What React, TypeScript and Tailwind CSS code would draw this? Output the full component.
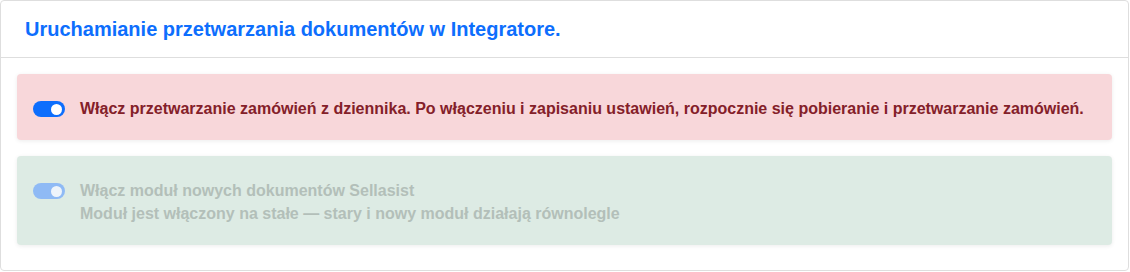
function Toggle({ disabled }: { disabled?: boolean }) {
  return (
    <div
      className={
        "mt-[4px] flex h-4 w-8 shrink-0 items-center justify-end rounded-full pr-[3px] " +
        (disabled ? "bg-[#8fbaf5]" : "bg-[#0d6efd]")
      }
    >
      <div className={"h-[11px] w-[11px] rounded-full " + (disabled ? "bg-[#eef4fb]" : "bg-white")} />
    </div>
  );
}

export default function App() {
  return (
    <div className="bg-white" style={{ fontFamily: '"Liberation Sans", Arial, sans-serif' }}>
      <div className="w-[1129px] h-[271px] rounded-[4px] border border-[#dedede] bg-white">
        {/* header */}
        <div className="border-b border-[#dedede] px-6 py-4">
          <h1 className="text-[20px] leading-6 font-bold text-[#0d6efd]">
            Uruchamianie przetwarzania dokumentów w Integratore.
          </h1>
        </div>

        {/* body */}
        <div className="flex flex-col gap-4 p-4">
          <div className="flex items-start gap-[15px] rounded-[4px] bg-[#f8d7da] pt-[23px] pb-[20px] pl-4 pr-4 shadow-[0_1px_4px_rgba(0,0,0,0.08)]">
            <Toggle />
            <p className="text-[16px] leading-[23px] font-bold text-[#842029]">
              Włącz przetwarzanie zamówień z dziennika. Po włączeniu i zapisaniu ustawień, rozpocznie się pobieranie i przetwarzanie zamówień.
            </p>
          </div>

          <div className="flex items-start gap-[15px] rounded-[4px] bg-[#ddebe4] pt-[23px] pb-[20px] pl-4 pr-4 shadow-[0_1px_4px_rgba(0,0,0,0.08)]">
            <Toggle disabled />
            <div className="text-[16px] leading-[23px] font-bold text-[#b3bfb9]">
              <p>Włącz moduł nowych dokumentów Sellasist</p>
              <p>Moduł jest włączony na stałe — stary i nowy moduł działają równolegle</p>
            </div>
          </div>
        </div>
      </div>
    </div>
  );
}
